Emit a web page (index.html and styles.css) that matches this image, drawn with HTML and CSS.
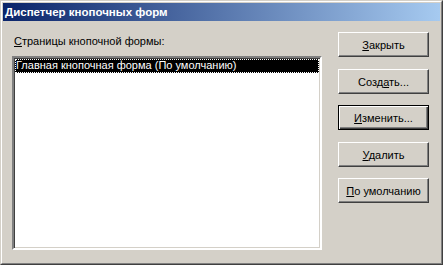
FILE: index.html
```html
<!DOCTYPE html>
<html lang="ru">
<head>
  <meta charset="UTF-8">
  <title>Диспетчер кнопочных форм</title>
  <link rel="stylesheet" href="styles.css">
</head>
<body>
  <div class="window">
    <div class="frame">
      <div class="titlebar">Диспетчер кнопочных форм</div>
      <div class="content">
        <div class="left">
          <div class="label"><u>С</u>траницы кнопочной формы:</div>
          <div class="listbox">
            <div class="item selected">Главная кнопочная форма (По умолчанию)</div>
          </div>
        </div>
        <div class="buttons">
          <button class="btn"><u>З</u>акрыть</button>
          <button class="btn">Созд<u>а</u>ть...</button>
          <button class="btn default"><u>И</u>зменить...</button>
          <button class="btn"><u>У</u>далить</button>
          <button class="btn"><u>П</u>о умолчанию</button>
        </div>
      </div>
    </div>
  </div>
</body>
</html>
```

FILE: styles.css
```css
* { margin: 0; padding: 0; box-sizing: border-box; }
body { width: 443px; height: 265px; background: #d4d0c8; font-family: "Liberation Sans", Arial, sans-serif; font-size: 11px; color: #000; }

/* Window frame */
.window { width: 443px; height: 265px; border: 1px solid; border-color: #d4d0c8 #404040 #404040 #d4d0c8; }
.frame { width: 100%; height: 100%; border: 1px solid; border-color: #fff #808080 #808080 #fff; padding: 1px; display: flex; flex-direction: column; }
.titlebar {
  height: 18px;
  background: linear-gradient(to right, #0a246a, #a6caf0);
  color: #fff;
  font-weight: bold;
  font-size: 11.5px;
  line-height: 18px;
  padding-left: 2px;
}

/* Body */
.content { display: flex; padding: 11px 0 0 9px; }
.left { width: 310px; display: flex; flex-direction: column; padding-top: 3px; }
.label { height: 21px; line-height: 13px; padding-left: 2px; }
.label u, .btn u { text-decoration: underline; text-underline-offset: 1px; }

.listbox {
  width: 310px;
  height: 194px;
  background: #fff;
  border: 2px solid;
  border-color: #808080 #fff #fff #808080;
  box-shadow: inset 1px 1px 0 #404040, inset -1px -1px 0 #d4d0c8;
  padding: 1px 1px;
}
.item { height: 14px; line-height: 13px; padding-left: 1px; white-space: nowrap; }
.item.selected { background: #000; color: #fff; outline: 1px dotted #fff; outline-offset: -1px; }

.buttons { display: flex; flex-direction: column; margin-left: 16px; }
.btn {
  width: 91px;
  height: 25px;
  margin-bottom: 12px;
  background: #d4d0c8;
  font-family: "Liberation Sans", Arial, sans-serif;
  font-size: 11px;
  color: #000;
  border: 1px solid;
  border-color: #fff #404040 #404040 #fff;
  box-shadow: inset -1px -1px 0 #808080;
}
.btn:nth-child(even) { margin-bottom: 11px; }
.btn.default {
  border: 1px solid #000;
  box-shadow: inset 1px 1px 0 #fff, inset -1px -1px 0 #404040, inset -2px -2px 0 #808080;
}
```
